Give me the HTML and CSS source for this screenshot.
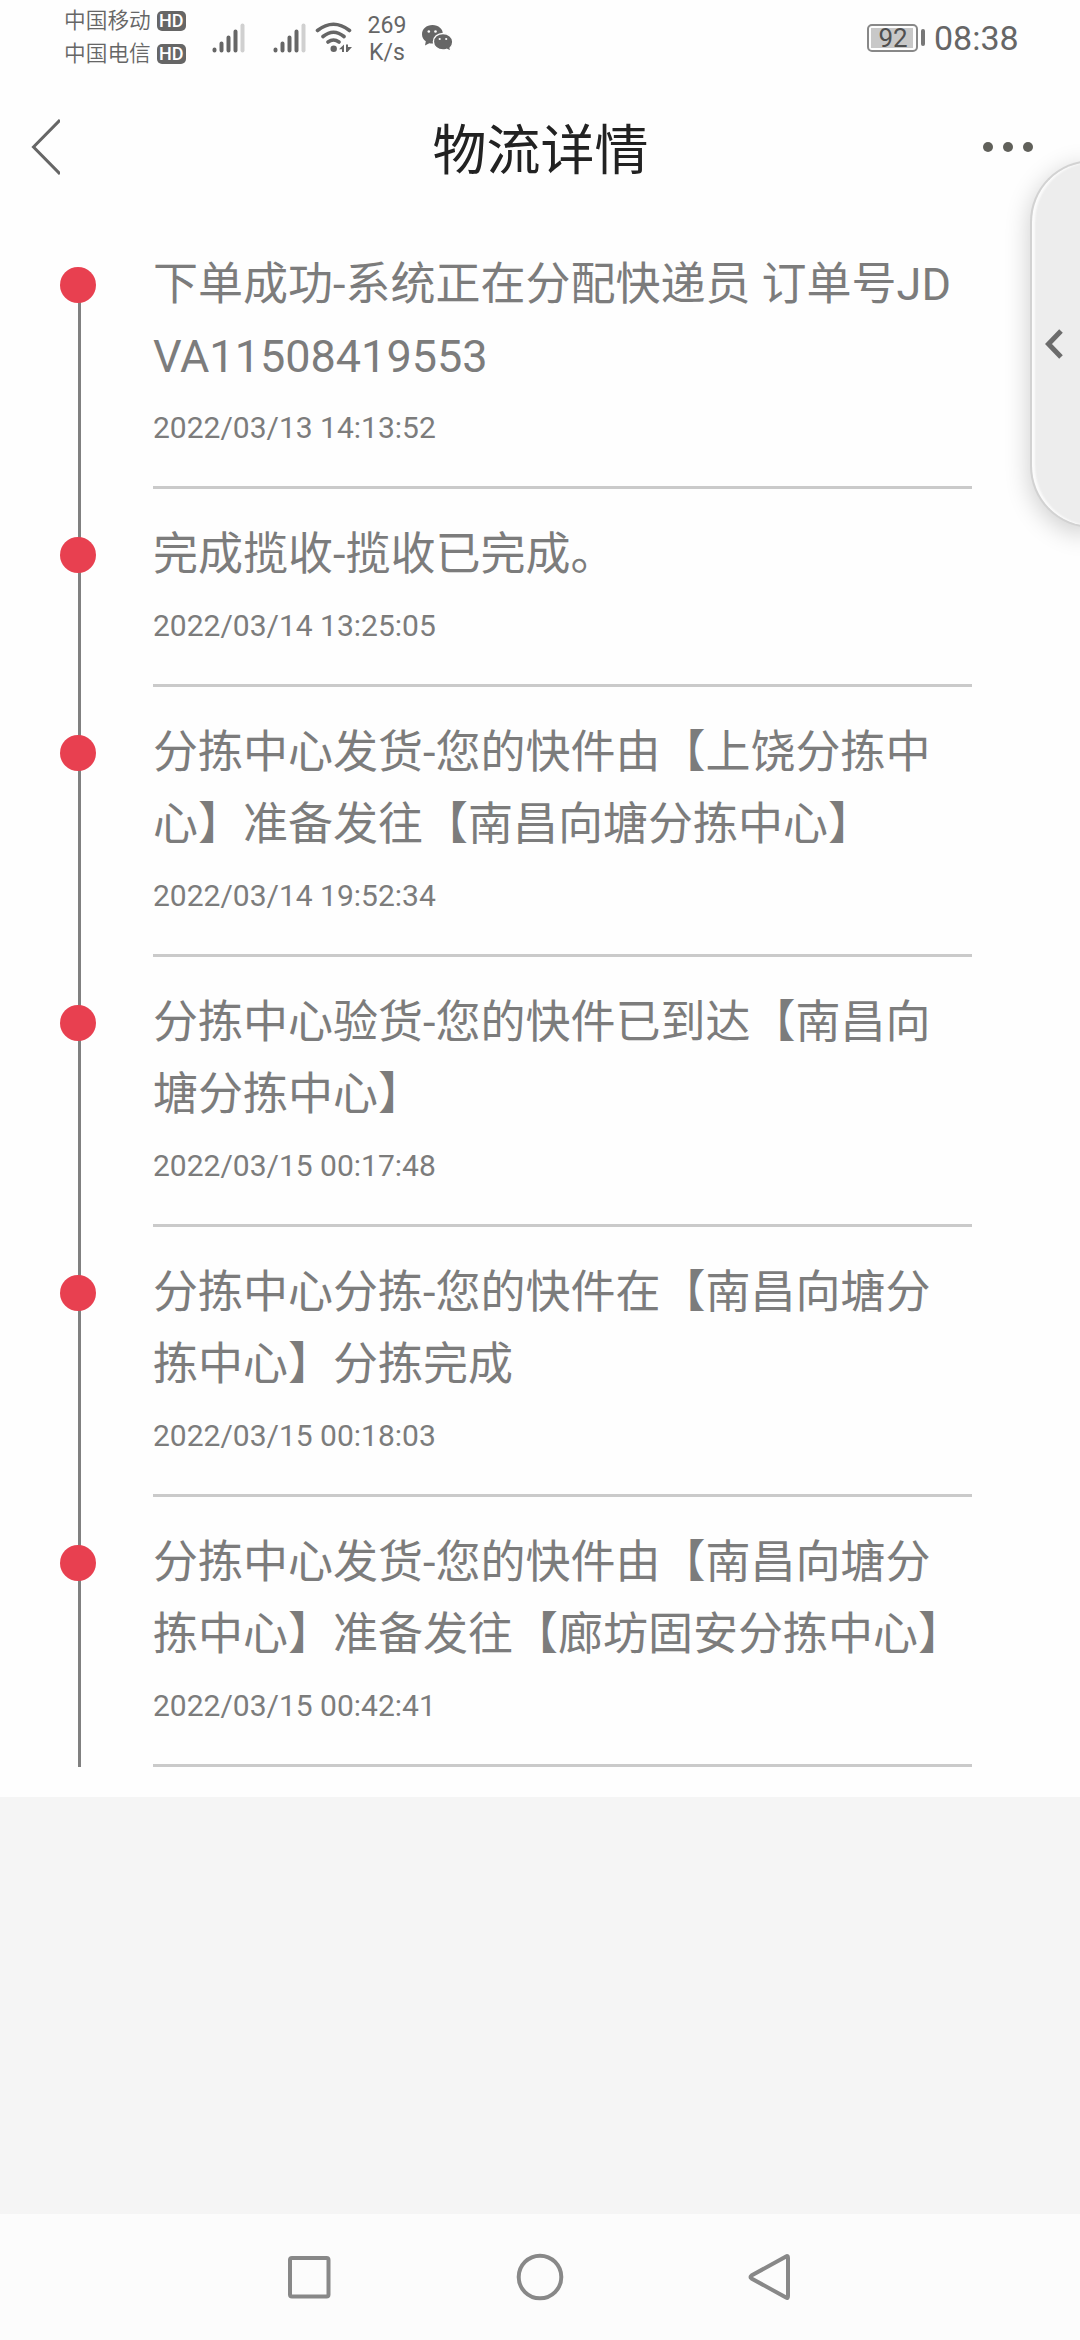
FILE: index.html
```html
<!DOCTYPE html>
<html lang="zh-CN">
<head>
  <meta charset="UTF-8" />
  <meta name="viewport" content="width=device-width, initial-scale=1.0"/>
  <title>物流详情</title>
  <link rel="stylesheet" href="styles.css">
</head>
<body>

  <!-- Status bar -->
  <div class="status-bar">
    <div class="carriers">
      <div class="carrier">中国移动<span class="hd">HD</span></div>
      <div class="carrier">中国电信<span class="hd">HD</span></div>
    </div>
    <svg class="signal" width="33" height="32" viewBox="0 0 33 32">
      <path d="M2.5 28.5v-1M9.5 28.5v-7M16.5 28.5v-13M23.5 28.5v-19" />
      <path class="weak" d="M30.5 28.5v-25" />
    </svg>
    <svg class="signal signal-2" width="33" height="32" viewBox="0 0 33 32">
      <path d="M2.5 28.5v-1M9.5 28.5v-7M16.5 28.5v-13M23.5 28.5v-19" />
      <path class="weak" d="M30.5 28.5v-25" />
    </svg>
    <svg class="wifi" width="38" height="32" viewBox="0 0 38 32">
      <path class="arc" d="M2.5 8.5Q18.5 -4 34.500 8.500M8 14.500Q18.500 6 29 14.500M13 20Q18.500 16 24 20" />
      <circle cx="18.7" cy="26.7" r="3.2" />
      <path d="M24 27.2l5-4.7v7.5h-2v-2.8zM31 22.5h2v2.6h4l-4.5 5h-1.5z" />
    </svg>
    <div class="speed">269<br>K/s</div>
    <svg class="wechat" width="34" height="30" viewBox="0 0 34 30">
      <path d="M11.5 2C5.3 2 1 6 1 11.2c0 3 1.4 5.400 3.800 7.100L4 22.500l4.300-2.300c1 .3 2.100.4 3.200.4C17.500 20.600 22 16.500 22 11.300 22 6 17.500 2 11.500 2z" />
      <path class="front" d="M22 10.500c-5.400 0-9.600 3.500-9.600 8.200s4.200 8.200 9.600 8.200c1.300 0 2.500-.2 3.600-.6l4.400 2.200-.9-3.600c1.700-1.500 2.700-3.700 2.700-6.200 0-4.700-4.400-8.200-9.800-8.200z" />
      <g class="eyes">
        <circle cx="7.8" cy="8.5" r="1.3" /><circle cx="14.5" cy="8.5" r="1.3" />
        <circle cx="18.7" cy="16" r="1.1" /><circle cx="25.2" cy="16" r="1.1" />
      </g>
    </svg>
    <div class="battery"><span>92</span></div>
    <div class="battery-cap"></div>
    <div class="clock">08:38</div>
  </div>

  <div class="header">
    <svg class="back" width="30" height="56" viewBox="0 0 30 56">
      <path d="M30 1L3.500 28L30 55" />
    </svg>
    <h1>物流详情</h1>
    <div class="more"><i></i><i></i><i></i></div>
  </div>

  <!-- Tracking records -->
  <div class="timeline">
    <div class="item">
      <span class="dot"></span>
      <div class="info">
        <p>下单成功-系统正在分配快递员 订单号JD<br>VA11508419553</p>
        <time>2022/03/13 14:13:52</time>
      </div>
    </div>
    <div class="item">
      <span class="dot"></span>
      <div class="info">
        <p>完成揽收-揽收已完成。</p>
        <time>2022/03/14 13:25:05</time>
      </div>
    </div>
    <div class="item">
      <span class="dot"></span>
      <div class="info">
        <p>分拣中心发货-您的快件由【上饶分拣中<br>心】准备发往【南昌向塘分拣中心】</p>
        <time>2022/03/14 19:52:34</time>
      </div>
    </div>
    <div class="item">
      <span class="dot"></span>
      <div class="info">
        <p>分拣中心验货-您的快件已到达【南昌向<br>塘分拣中心】</p>
        <time>2022/03/15 00:17:48</time>
      </div>
    </div>
    <div class="item">
      <span class="dot"></span>
      <div class="info">
        <p>分拣中心分拣-您的快件在【南昌向塘分<br>拣中心】分拣完成</p>
        <time>2022/03/15 00:18:03</time>
      </div>
    </div>
    <div class="item">
      <span class="dot"></span>
      <div class="info">
        <p>分拣中心发货-您的快件由【南昌向塘分<br>拣中心】准备发往【廊坊固安分拣中心】</p>
        <time>2022/03/15 00:42:41</time>
      </div>
    </div>
  </div>

  <!-- Edge drawer handle -->
  <div class="drawer">
    <svg width="20" height="32" viewBox="0 0 20 32">
      <path d="M17 3L4.500 16L17 29" />
    </svg>
  </div>

  <!-- System navigation -->
  <div class="nav-bar">
    <svg width="50" height="50" viewBox="0 0 50 50"><rect x="6" y="6" width="38.5" height="38.5" rx="2" /></svg>
    <svg width="50" height="50" viewBox="0 0 50 50"><circle cx="25" cy="25" r="21.3" /></svg>
    <svg width="50" height="50" viewBox="0 0 50 50"><path d="M40 4.500Q42 3 42 6V44Q42 47 40 45.500L5.500 26.500Q3.500 25 5.500 23.500Z" /></svg>
  </div>

</body>
</html>
```
FILE: styles.css
```css
* {
  box-sizing: border-box;
}
body {
  font-family: Roboto, "Noto Sans CJK SC", sans-serif;
  background: #f5f5f5;
  margin: 0;
  height: 2340px;
  display: flex;
  flex-direction: column;
  position: relative;
  overflow: hidden;
  text-spacing-trim: space-all;
}

/* status bar */
.status-bar {
  display: flex;
  align-items: flex-start;
  height: 90px;
  padding-left: 64px;
  background: #fefefe;
  color: #666;
}
.status-bar svg {
  fill: #666;
  flex: none;
}
.carriers {
  width: 148px;
  padding-top: 4px;
}
.carrier {
  display: flex;
  align-items: center;
  height: 33px;
  font-size: 21.7px;
  font-weight: 350;
  line-height: 30px;
  white-space: nowrap;
}
.hd {
  width: 29px;
  height: 20px;
  margin-left: 6px;
  border-radius: 5px;
  background: #666;
  color: #fff;
  font-size: 18px;
  font-weight: 500;
  line-height: 20px;
  text-align: center;
}
.signal {
  margin-top: 22px;
}
.signal path {
  fill: none;
  stroke: #666;
  stroke-width: 4;
  stroke-linecap: round;
}
.signal .weak {
  stroke: #d0d0d0;
}
.signal-2 {
  margin-left: 28px;
}
.wifi {
  margin: 22px 0 0 9px;
}
.wifi .arc {
  fill: none;
  stroke: #666;
  stroke-width: 3.6;
  stroke-linecap: round;
}
.speed {
  width: 60px;
  margin-left: 4px;
  padding-top: 12px;
  font-size: 23px;
  line-height: 27px;
  text-align: center;
}
.wechat {
  margin: 23px 0 0 4px;
}
.wechat .front {
  stroke: #fefefe;
  stroke-width: 1.4;
}
.wechat .eyes {
  fill: #fefefe;
}
.battery {
  width: 51px;
  height: 28px;
  margin: 24px 0 0 412px;
  padding: 2px;
  border: 2px solid #888;
  border-radius: 5px;
}
.battery span {
  display: block;
  width: 42px;
  height: 20px;
  background: #c8c8c8;
  color: #505050;
  font-size: 26px;
  line-height: 20px;
  text-align: center;
  padding-left: 2px;
}
.battery-cap {
  width: 4px;
  height: 17px;
  margin: 29px 0 0 3px;
  border-radius: 2px;
  background: #777;
}
.clock {
  margin: 18px 0 0 9px;
  font-size: 34px;
  line-height: 40px;
}

/* title bar */
.header {
  display: flex;
  justify-content: space-between;
  align-items: center;
  height: 114px;
  padding: 0 47px 0 30px;
  background: #fefefe;
}
.back {
  margin-right: 38px;
}
.back path {
  fill: none;
  stroke: #666;
  stroke-width: 3;
}
.header h1 {
  margin: -2px 0 0;
  color: #222;
  font-size: 54px;
  font-weight: 400;
}
.more {
  display: flex;
  gap: 10px;
}
.more i {
  width: 10px;
  height: 10px;
  border-radius: 50%;
  background: #60605a;
}

/* tracking list */
.timeline {
  position: relative;
  padding-top: 45px;
  background: #fefefe;
}
.timeline::before {
  content: "";
  position: absolute;
  left: 78px;
  top: 81px;
  bottom: 30px;
  width: 3px;
  background: #808080;
}
.item {
  display: flex;
  gap: 57px;
  padding: 0 0 30px 60px;
}
.dot {
  position: relative;
  flex: none;
  width: 36px;
  height: 36px;
  margin-top: 18px;
  border-radius: 50%;
  background: #e84050;
}
.info {
  width: 819px;
  padding-bottom: 36px;
  border-bottom: 3px solid #cacaca;
  color: #7c7c7c;
}
.info p {
  margin: 0 0 12px;
  font-size: 45px;
  line-height: 72px;
  white-space: nowrap;
}
.info time {
  display: block;
  font-size: 30px;
  line-height: 45px;
}

.drawer {
  position: absolute;
  right: -14px;
  top: 160px;
  width: 64px;
  height: 368px;
  display: flex;
  align-items: center;
  padding-left: 12px;
  border: 2px solid #d2d2d2;
  border-right: none;
  border-radius: 62px 0 0 62px;
  background: #ededed;
  box-shadow: inset 3px 0 2px #fbfbfb, 0 6px 26px rgba(0, 0, 0, 0.2);
}
.drawer path {
  fill: none;
  stroke: #6c6c6c;
  stroke-width: 5;
}

.nav-bar {
  display: flex;
  justify-content: center;
  gap: 181px;
  height: 126px;
  margin-top: auto;
  padding-top: 38px;
  background: #fcfcfc;
}
.nav-bar svg {
  fill: none;
  stroke: #888;
  stroke-width: 4;
}
```
